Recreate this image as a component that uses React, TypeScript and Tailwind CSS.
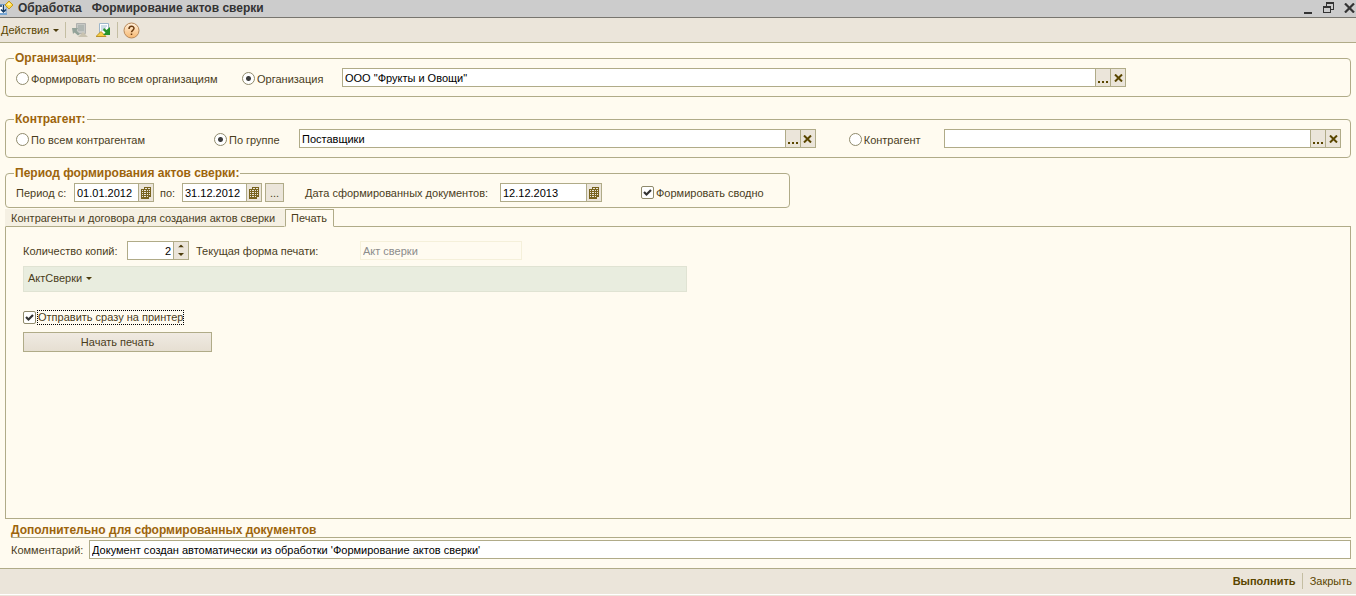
import { useState, type ReactNode } from 'react';

type FieldProps = {
  label: string;
  value?: string;
  className?: string;
};

const CloseIcon = () => (
  <svg width="9" height="8" viewBox="0 0 9 8" fill="none" stroke="#5a4600" strokeWidth="2" aria-hidden="true">
    <path d="M1 .5 8 7.5M8 .5 1 7.5" />
  </svg>
);

const CalendarIcon = () => (
  <svg width="10" height="12" viewBox="0 0 10 12" shapeRendering="crispEdges" aria-hidden="true">
    <path fill="#78631f" d="M3 0h7v10H8v2H0V2h3z" />
    <path fill="#ebe5da" d="M4 1h2v1H4zM7 1h2v1H7zM1 3h1v1H1zM3 3h2v1H3zM6 3h1v1H6zM1 5h1v1H1zM3 5h2v1H3zM6 5h1v1H6zM1 7h1v1H1zM3 7h2v1H3zM6 7h1v1H6zM1 9h1v1H1zM3 9h2v1H3zM6 9h1v1H6zM8 3h1v1H8zM8 5h1v1H8zM8 7h1v1H8z" />
  </svg>
);

const CaretDown = () => (
  <svg width="6" height="3" viewBox="0 0 6 3" fill="#4d3d0c" aria-hidden="true">
    <path d="M0 0h6L3 3z" />
  </svg>
);

const AppIcon = () => (
  <svg width="14" height="16" viewBox="0 0 14 16" aria-hidden="true">
    <path d="M0 3.500h6v10H0" fill="#fff" stroke="#6f9bc8" />
    <path d="M0 12h7v2H0z" fill="#77a6d3" />
    <path d="M3.500 4v7M1 8.500l2.500 2.500L6 8.500M0 5h2" fill="none" stroke="#173d66" strokeWidth="1.500" />
    <path d="m9 0 4 4-4 4-4-4z" fill="#ffd94a" stroke="#c49a1c" />
    <path d="m9 1.500 2 2-2 1-2-1z" fill="#fff2a8" />
  </svg>
);

const RestoreFormIcon = () => (
  <svg width="16" height="16" viewBox="0 0 16 16" aria-hidden="true">
    <path d="M4.500 1.500h9v10h-9z" fill="#c6c8c4" stroke="#b0b1ae" />
    <path d="M6 4h6M6 6h6M6 8h6" stroke="#9ba6a1" />
    <path d="M0 6h6L4.500 8.500 8 12l-2 1.500-3.500-3L1 12z" fill="#93a399" />
    <path d="m6 15 5-5 5 5z" fill="#c9c3b0" />
  </svg>
);

const SaveFormIcon = () => (
  <svg width="16" height="16" viewBox="0 0 16 16" aria-hidden="true">
    <path d="M3.500 1.500h9v11h-9z" fill="#fff" stroke="#9db6ca" />
    <path d="M5 4h6M5 6h5M5 8h4" stroke="#9dbad0" />
    <path d="m0 14.500 5-5 5 5z" fill="#f6cd45" stroke="#bb9226" />
    <path d="M8 6l2.500 2L14 5v8H7l2.500-2.500L7 8z" fill="#25932b" />
  </svg>
);

const HelpIcon = () => (
  <svg width="17" height="17" viewBox="0 0 17 17" aria-hidden="true">
    <defs>
      <linearGradient id="help" x1="0" y1="0" x2="0" y2="1">
        <stop stopColor="#fff0dc" />
        <stop offset="1" stopColor="#f7b870" />
      </linearGradient>
    </defs>
    <circle cx="8.500" cy="8.500" r="7.500" fill="url(#help)" stroke="#b8895a" />
    <path d="M6 7c0-3.500 5-3.500 5-.700 0 2-2.500 2-2.500 4M8.500 11.500v1.500" fill="none" stroke="#6b3b10" strokeWidth="1.500" />
  </svg>
);

const Separator = () => <span className="h-4 w-px bg-[#c4bea2]" />;

const Group = ({ title, className, children }: { title: string; className: string; children: ReactNode }) => (
  <fieldset className={`min-w-0 rounded-[4px] border border-[#b0ab88] pl-[10px] ${className}`}>
    <legend className="-ml-[2px] pr-px pl-px text-[12px] leading-[14px] font-bold text-[#9c640c]">{title}</legend>
    <div className="flex items-center pt-[3px]">{children}</div>
  </fieldset>
);

const Radio = ({ name, label, checked, className }: { name: string; label: string; checked?: boolean; className: string }) => (
  <label className={`flex shrink-0 items-center gap-[2px] pt-[2px] whitespace-nowrap ${className}`}>
    <input
      type="radio"
      name={name}
      defaultChecked={checked}
      className="size-[13px] shrink-0 appearance-none rounded-full border border-[#8f8a6c] bg-white checked:bg-[radial-gradient(circle,#3d3d3d_2px,#ffffff_3px)]"
    />
    {label}
  </label>
);

const Checkbox = ({ label, focused }: { label: string; focused?: boolean }) => (
  <label className="flex items-center gap-px whitespace-nowrap">
    <span className="grid shrink-0">
      <input
        type="checkbox"
        defaultChecked
        className="peer col-start-1 row-start-1 size-[13px] appearance-none rounded-[2px] border border-[#8f8a6c] bg-white"
      />
      <svg
        width="13"
        height="13"
        viewBox="0 0 13 13"
        className="pointer-events-none invisible col-start-1 row-start-1 peer-checked:visible"
        aria-hidden="true"
      >
        <path d="M3 6l2.500 2.500L10 4" fill="none" stroke="#333" strokeWidth="2.200" />
      </svg>
    </span>
    <span className={focused ? 'border border-dotted border-black leading-[13px]' : 'pl-px'}>{label}</span>
  </label>
);

const fieldBox = 'flex h-[19px] border border-[#b0ab88] bg-white text-black';
const fieldInput = 'w-full min-w-0 flex-1 bg-transparent px-[2px] outline-none';
const fieldButton = 'flex w-[15px] shrink-0 items-center justify-center border-l border-[#b0ab88] bg-[#ebe5da] text-[#5a4600]';

const Lookup = ({ label, value, className }: FieldProps) => (
  <div className={`${fieldBox} ${className}`}>
    <input type="text" aria-label={label} defaultValue={value} className={fieldInput} />
    <button type="button" aria-label="Выбрать" className={fieldButton}>
      <svg width="10" height="2" viewBox="0 0 10 2" fill="currentColor" className="mt-2" aria-hidden="true">
        <path d="M0 0h2v2H0zM4 0h2v2H4zM8 0h2v2H8z" />
      </svg>
    </button>
    <button type="button" aria-label="Очистить" className={fieldButton}>
      <CloseIcon />
    </button>
  </div>
);

const DateField = ({ label, value, className }: FieldProps) => (
  <div className={`${fieldBox} ${className}`}>
    <input type="text" aria-label={label} defaultValue={value} className={fieldInput} />
    <button type="button" aria-label="Календарь" className={fieldButton}>
      <CalendarIcon />
    </button>
  </div>
);

const TitleBar = () => (
  <header className="flex h-[18px] items-center border-b border-[#77756e] bg-[#cccccc] pr-px text-[#333333]">
    <AppIcon />
    <h1 className="ml-1 flex-1 pb-px text-[12px] leading-[14px] font-bold whitespace-pre">Обработка{'   '}Формирование актов сверки</h1>
    <div className="flex items-center gap-[7px] pb-px">
      <button type="button" aria-label="Свернуть" className="flex size-3 items-end">
        <span className="h-[2px] w-2 bg-[#333333]" />
      </button>
      <button type="button" aria-label="Восстановить">
        <svg width="12" height="12" viewBox="0 0 12 12" fill="none" stroke="#333" shapeRendering="crispEdges">
          <path d="M3.500 4V1.500h7v6H8M3 .5h8" />
          <path d="M.5 4.500h7v6h-7zM.5 5.500h7" />
        </svg>
      </button>
      <button type="button" aria-label="Закрыть окно" className="pl-[2px]">
        <svg width="11" height="10" viewBox="0 0 11 10" fill="none" stroke="#333" strokeWidth="2.200">
          <path d="M1 .5l9 9M10 .5l-9 9" />
        </svg>
      </button>
    </div>
  </header>
);

const Toolbar = () => (
  <nav className="flex h-[25px] items-center border-b border-[#b0ab88] bg-[#ebe5da]">
    <button type="button" className="mr-[6px] flex items-center gap-1 pl-px text-[#5a4600]">
      Действия
      <CaretDown />
    </button>
    <Separator />
    <button type="button" aria-label="Восстановить значения" className="ml-[6px]">
      <RestoreFormIcon />
    </button>
    <button type="button" aria-label="Сохранить значения" className="mr-[5px] ml-2">
      <SaveFormIcon />
    </button>
    <Separator />
    <button type="button" aria-label="Справка" className="ml-[5px]">
      <HelpIcon />
    </button>
  </nav>
);

const PrintPanel = () => {
  const [copies, setCopies] = useState(2);

  return (
    <div className="flex flex-col items-start pt-[14px] pl-[17px]">
      <div className="flex items-center">
        <label htmlFor="copies" className="w-[104px]">
          Количество копий:
        </label>
        <div className={`${fieldBox} w-[62px]`}>
          <input
            id="copies"
            type="text"
            inputMode="numeric"
            value={copies}
            onChange={(e) => setCopies(Number(e.target.value) || 1)}
            className={`${fieldInput} text-right`}
          />
          <div className="flex w-[15px] shrink-0 flex-col border-l border-[#b0ab88] bg-[#ebe5da]">
            <button type="button" aria-label="Больше" onClick={() => setCopies(copies + 1)} className="flex flex-1 rotate-180 items-center justify-center">
              <CaretDown />
            </button>
            <button type="button" aria-label="Меньше" onClick={() => setCopies(Math.max(1, copies - 1))} className="flex flex-1 items-center justify-center">
              <CaretDown />
            </button>
          </div>
        </div>
        <label htmlFor="form" className="w-[171px] pl-[7px]">
          Текущая форма печати:
        </label>
        <input
          id="form"
          type="text"
          disabled
          defaultValue="Акт сверки"
          className="h-[19px] w-[162px] border border-[#f5f0da] bg-transparent px-[2px] text-[#8c8c8c]"
        />
      </div>
      <div className="mt-[6px] flex h-[26px] w-[664px] items-center border border-[#e0e3d3] bg-[#e9eddf] pb-[2px] pl-1">
        <button type="button" className="flex items-center gap-1">
          АктСверки
          <CaretDown />
        </button>
      </div>
      <div className="mt-[18px]">
        <Checkbox label="Отправить сразу на принтер" focused />
      </div>
      <button type="button" className="mt-[7px] h-5 w-[189px] border border-[#b0ab88] bg-linear-to-b from-[#f0eae2] to-[#e6dfd2]">
        Начать печать
      </button>
    </div>
  );
};

const tabs = [
  { title: 'Контрагенты и договора для создания актов сверки', width: 'w-[280px]' },
  { title: 'Печать', width: 'w-[49px]' },
];

export default function App() {
  const [active, setActive] = useState(1);

  return (
    <div className="flex min-h-screen flex-col bg-[#fffbf0] font-['Liberation_Sans',Arial,sans-serif] text-[11px] leading-[14px] text-[#4a3d1c]">
      <TitleBar />
      <Toolbar />

      <main className="flex flex-1 flex-col px-[5px] pt-2 pb-[9px]">
        <Group title="Организация:" className="h-[46px]">
          <Radio name="org" label="Формировать по всем организациям" className="w-[226px]" />
          <Radio name="org" label="Организация" checked className="w-[100px]" />
          <Lookup label="Организация" value={'ООО "Фрукты и Овощи"'} className="mr-[224px] flex-1" />
        </Group>

        <Group title="Контрагент:" className="mt-[15px] h-[46px]">
          <Radio name="partner" label="По всем контрагентам" className="w-[198px]" />
          <Radio name="partner" label="По группе" checked className="w-[85px]" />
          <Lookup label="Группа" value="Поставщики" className="grow-[517] basis-0" />
          <Radio name="partner" label="Контрагент" className="ml-[33px] w-[95px]" />
          <Lookup label="Контрагент" className="mr-[9px] grow-[397] basis-0" />
        </Group>

        <Group title="Период формирования актов сверки:" className="mt-2 h-[42px] w-[785px]">
          <span className="w-[58px]">Период с:</span>
          <DateField label="Период с" value="01.01.2012" className="w-[80px]" />
          <span className="w-[28px] pl-[6px]">по:</span>
          <DateField label="Период по" value="31.12.2012" className="w-[80px]" />
          <button type="button" className="ml-[3px] h-[19px] w-[19px] border border-[#b0ab88] bg-[#ebe5da]">
            ...
          </button>
          <span className="w-[216px] pl-[21px] whitespace-nowrap">Дата сформированных документов:</span>
          <DateField label="Дата сформированных документов" value="12.12.2013" className="mr-[39px] w-[102px]" />
          <Checkbox label="Формировать сводно" />
        </Group>

        <div role="tablist" className="-mb-px flex pt-px">
          {tabs.map((tab, i) => (
            <button
              key={tab.title}
              type="button"
              role="tab"
              aria-selected={active === i}
              onClick={() => setActive(i)}
              className={`z-10 h-[18px] border px-[5px] text-left whitespace-nowrap ${tab.width} ${
                active === i ? 'border-[#b0ab88] border-b-[#fffbf0] bg-[#fffbf0]' : 'border-transparent border-b-[#b0ab88] bg-[#f5f0e3]'
              }`}
            >
              {tab.title}
            </button>
          ))}
        </div>
        <section role="tabpanel" className="flex-1 border border-[#b0ab88]">
          {active === 1 && <PrintPanel />}
        </section>

        <h2 className="mt-1 ml-[6px] border-b border-[#b0ab88] text-[12px] leading-[14px] font-bold text-[#9c640c]">
          Дополнительно для сформированных документов
        </h2>
        <div className="mt-[2px] flex items-center pl-[6px]">
          <label htmlFor="comment" className="w-[78px]">
            Комментарий:
          </label>
          <div className={`${fieldBox} flex-1`}>
            <input
              id="comment"
              type="text"
              defaultValue="Документ создан автоматически из обработки 'Формирование актов сверки'"
              className={fieldInput}
            />
          </div>
        </div>
      </main>

      <footer className="border-t border-[#b0ab88] bg-[#ebe5da] pb-px">
        <div className="flex h-[26px] items-center justify-end border-b border-white pr-1 pb-[2px] text-[#5a4600]">
          <button type="button" className="pr-[6px] font-bold">
            Выполнить
          </button>
          <Separator />
          <button type="button" className="pl-[7px]">
            Закрыть
          </button>
        </div>
      </footer>
    </div>
  );
}
